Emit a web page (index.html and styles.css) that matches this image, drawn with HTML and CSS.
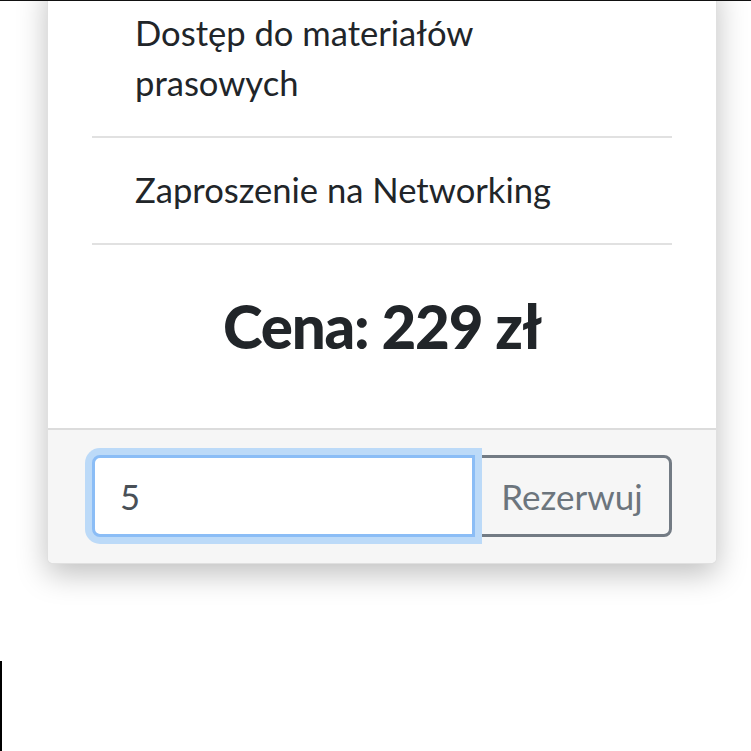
FILE: index.html
```html
<!DOCTYPE html>
<html lang="pl">
<head>
<meta charset="utf-8">
<link rel="stylesheet" href="styles.css">
<title>Pakiet</title>
</head>
<body>
<div class="page">
  <div class="card">
    <div class="card-body">
      <ul class="features">
        <li>Dostęp do materiałów<br>prasowych</li>
        <li>Zaproszenie na Networking</li>
      </ul>
      <div class="price">Cena: 229 zł</div>
    </div>
    <div class="card-footer">
      <form class="input-group">
        <input class="qty" type="text" value="5">
        <button class="btn-reserve" type="button">Rezerwuj</button>
      </form>
    </div>
  </div>
</div>
<div class="edge-mark"></div>
</body>
</html>
```
FILE: styles.css
```css
html, body {
  margin: 0;
  padding: 0;
  background: #fff;
}
body {
  border-top: 1px solid #111;
  font-family: Lato, "Liberation Sans", sans-serif;
  color: #212529;
  min-height: 750px;
  overflow: hidden;
}
.page {
  padding-left: 47px;
}
.card {
  width: 668px;
  margin-top: -21px;
  background: #fff;
  border: 1px solid rgba(0,0,0,.12);
  border-radius: 6px;
  box-shadow: 0 10px 30px rgba(0,0,0,.25);
  overflow: hidden;
}
.card-body {
  padding: 0 44px;
}
.features {
  list-style: none;
  margin: 0;
  padding: 0;
}
.features li {
  font-size: 34.6px;
  line-height: 50px;
  padding: 27px 43px 28px;
  border-bottom: 2px solid #e1e1e1;
}
.price {
  text-align: center;
  font-weight: 900;
  font-size: 60px;
  letter-spacing: -1.2px;
  line-height: 72px;
  padding: 45px 0 66px;
}
.card-footer {
  background: #f6f6f6;
  border-top: 2px solid #dcdcdc;
  padding: 25px 44px 26px;
}
.input-group {
  display: flex;
  margin: 0;
}
.qty {
  flex: 1;
  min-width: 0;
  height: 82px;
  box-sizing: border-box;
  border: 3px solid #8bbdf6;
  border-radius: 8px 0 0 8px;
  box-shadow: 0 0 0 7px #bcdaf8;
  padding: 0 25px;
  font-family: Lato, "Liberation Sans", sans-serif;
  font-size: 34.6px;
  color: #495057;
  background: #fff;
  outline: none;
  position: relative;
  z-index: 2;
}
.btn-reserve {
  width: 200px;
  height: 82px;
  margin-left: -3px;
  box-sizing: border-box;
  border: 3px solid #737b84;
  border-radius: 0 8px 8px 0;
  background: transparent;
  color: #6c757d;
  font-family: Lato, "Liberation Sans", sans-serif;
  font-size: 35px;
  padding: 0 20px;
}
.edge-mark {
  position: absolute;
  left: 0;
  top: 661px;
  width: 2px;
  height: 90px;
  background: #000;
}
```
